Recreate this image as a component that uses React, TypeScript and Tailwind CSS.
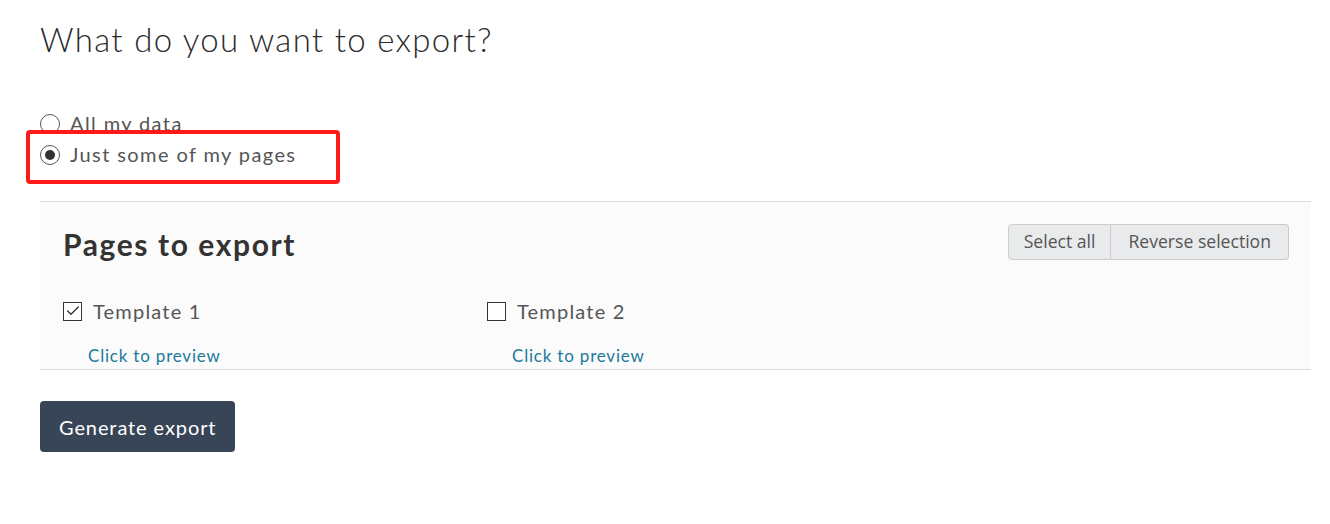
import { Check } from "lucide-react";

const font = { fontFamily: "Lato, 'Open Sans', sans-serif" };

const templates = [
  { name: "Template 1", checked: true },
  { name: "Template 2", checked: false },
];

const App = () => {
  return (
    <div className="w-[1330px] h-[524px] bg-white pl-10 pr-[19px] pt-[17px] text-[#333]" style={font}>
      <h1 className="text-[33px] font-light leading-[44px] text-[#2b2b2b] tracking-[1.3px]">What do you want to export?</h1>

      <div className="relative mt-[51px] flex flex-col gap-[8px] text-[20px] text-[#555] tracking-[1.4px]">
        <label className="flex items-center gap-[10px] leading-[23px]">
          <span className="w-[20px] h-[20px] rounded-full border border-[#555] bg-white" />
          All my data
        </label>
        <label className="flex items-center gap-[10px] leading-[23px]">
          <span className="w-[20px] h-[20px] rounded-full border border-[#555] bg-white flex items-center justify-center">
            <span className="w-[10px] h-[10px] rounded-full bg-[#333]" />
          </span>
          Just some of my pages
        </label>
        <div className="absolute left-[-14px] top-[18px] w-[314px] h-[54px] border-[4px] border-[#ff1a1a] rounded-[4px]" />
      </div>

      <div className="mt-[35px] bg-[#fbfbfb] border-t border-b border-[#ddd] px-[23px] pt-[21px] h-[169px]">
        <div className="flex items-center justify-between">
          <h2 className="text-[30px] font-bold text-[#333] leading-[42px] tracking-[1.6px]">Pages to export</h2>
          <div className="flex mr-[-1px] mb-[5px]" style={{ fontFamily: "'Open Sans', sans-serif" }}>
            <button className="h-[36px] px-[15px] text-[17.6px] text-[#555] bg-[#e9eaec] border border-[#ccc] rounded-l-[4px]">Select all</button>
            <button className="h-[36px] px-[17px] text-[17.6px] text-[#555] bg-[#e9eaec] border border-l-0 border-[#ccc] rounded-r-[4px]">Reverse selection</button>
          </div>
        </div>
        <div className="mt-[32px] flex">
          {templates.map((t) => (
            <div key={t.name} className="w-[424px]">
              <label className="flex items-center gap-[11px] text-[20px] text-[#555] leading-[28px] tracking-[1.2px]">
                <span className="w-[19px] h-[19px] border border-[#333] bg-white flex items-center justify-center">
                  {t.checked && <Check size={16} strokeWidth={2} className="text-[#333]" />}
                </span>
                {t.name}
              </label>
              <a className="block mt-[19px] ml-[25px] text-[17px] text-[#1b7a9c] leading-[24px] tracking-[0.8px]">Click to preview</a>
            </div>
          ))}
        </div>
      </div>

      <button className="mt-[31px] h-[51px] px-[19px] bg-[#374557] text-white text-[20px] rounded-[4px] tracking-[0.9px]">Generate export</button>
    </div>
  );
};

export default App;
